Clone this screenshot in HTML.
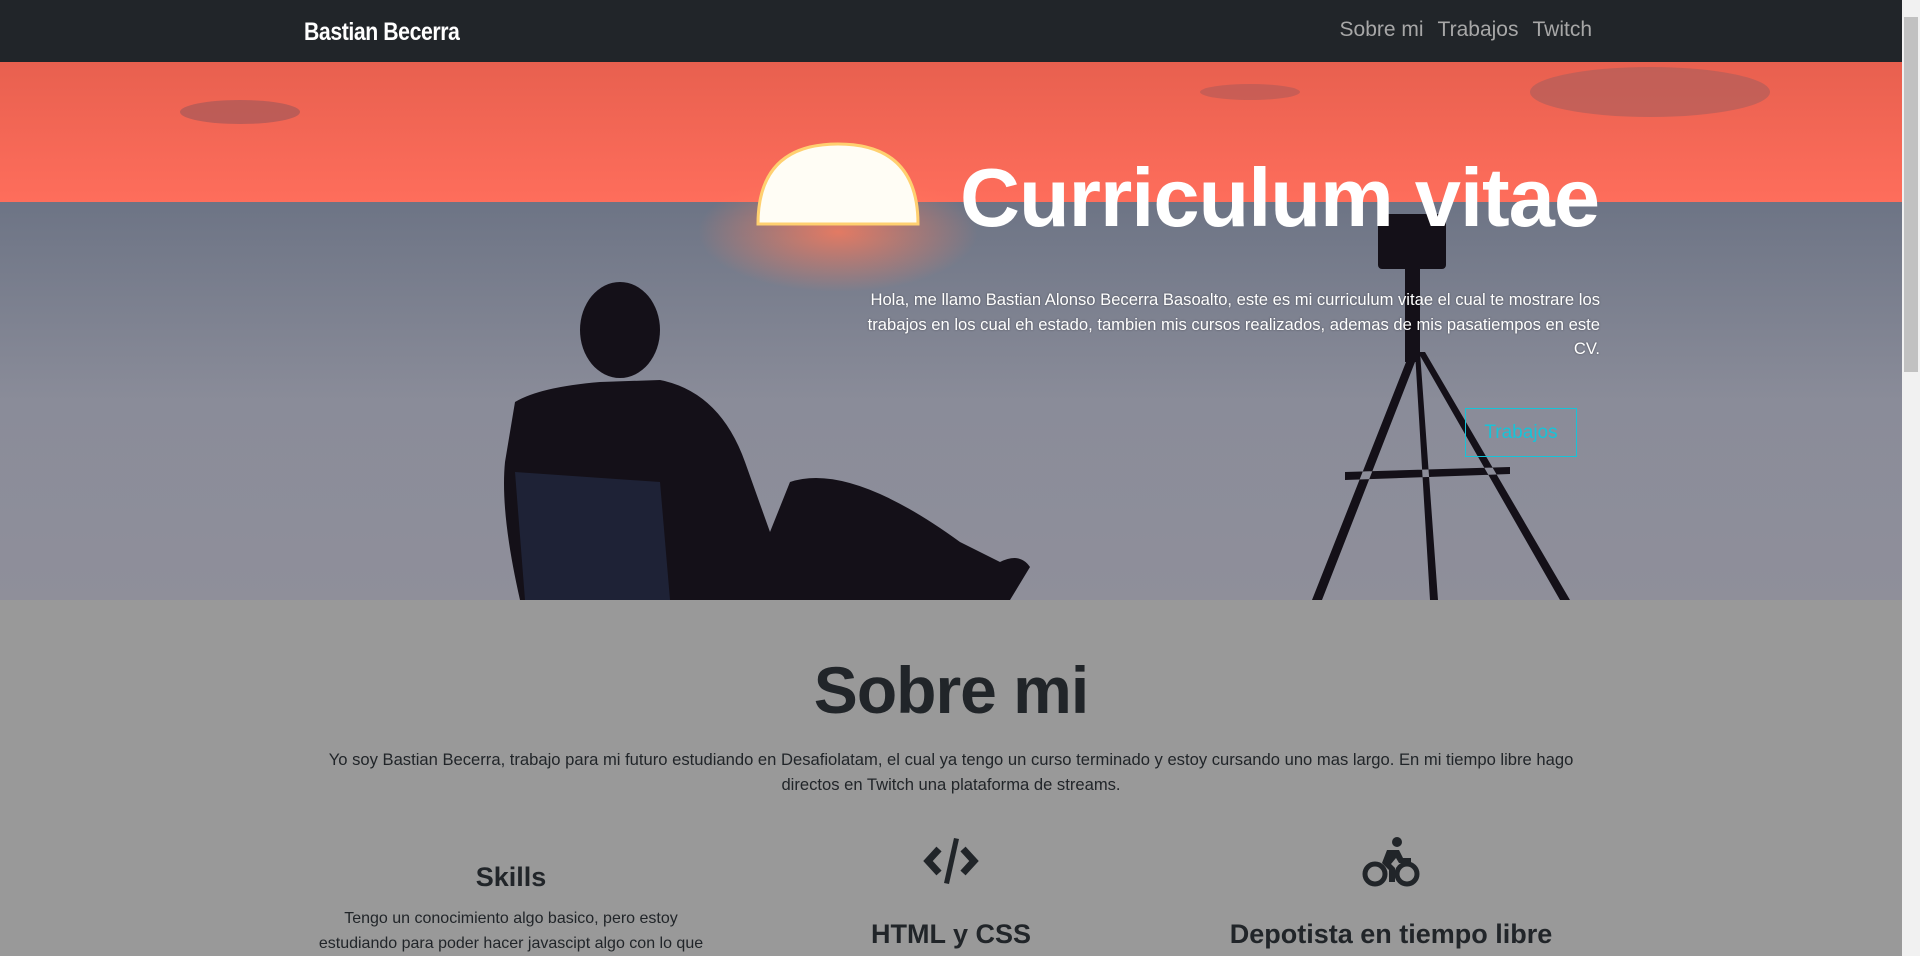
<!DOCTYPE html>
<html><head><meta charset="utf-8">
<style>
*{margin:0;padding:0;box-sizing:border-box}
html,body{width:1920px;height:956px;overflow:hidden;background:#999;font-family:"Liberation Sans",sans-serif}
.nav{position:absolute;left:0;top:0;width:1902px;height:62px;background:#212529}
.brand{position:absolute;left:304px;top:18px;color:#fff;font-family:"Liberation Sans Narrow","Liberation Sans",sans-serif;font-weight:bold;font-size:25px;transform:scaleX(.85);transform-origin:left;letter-spacing:-0.5px}
.links{position:absolute;right:310px;top:18px;color:#a7a7a7;font-size:21px}
.links span{margin-left:14px}
.hero{position:absolute;left:0;top:62px;width:1902px;height:538px;overflow:hidden}
.hero svg{position:absolute;left:0;top:0}
h1{position:absolute;right:303px;top:88px;color:#fff;font-size:83px;font-weight:bold;letter-spacing:-1px}
.hp{position:absolute;left:860px;width:740px;top:226px;color:#fff;font-size:16.6px;line-height:24.5px;text-align:right;text-shadow:0 0 2px rgba(0,0,0,.4)}
.btn{position:absolute;left:1465px;top:346px;width:112px;height:49px;border:1px solid #17c3d8;color:#17c3d8;font-size:19px;text-align:center;line-height:47px}
.sec{position:absolute;left:0;top:600px;width:1902px;height:356px;background:#999;color:#212529;text-align:center}
.sec h2{position:absolute;left:0;width:1902px;top:52px;font-size:66px;font-weight:bold;letter-spacing:-1px}
.sec .p{position:absolute;left:310px;width:1282px;top:148px;font-size:16.6px;line-height:24.5px}
.col{position:absolute;width:420px;text-align:center}
.col h3{font-size:27px;font-weight:bold}
.col p{font-size:16px;line-height:24.5px;margin-top:14px}
.sb{position:absolute;left:1902px;top:0;width:18px;height:956px;background:#f1f1f1}
.sb .t{position:absolute;left:2px;top:17px;width:14px;height:355px;background:#c1c1c1}
</style></head><body>
<div class="nav"><div class="brand">Bastian Becerra</div>
<div class="links"><span>Sobre mi</span><span>Trabajos</span><span>Twitch</span></div></div>
<div class="hero">
<svg width="1902" height="538" viewBox="0 0 1902 538">
<defs>
<linearGradient id="sky" x1="0" y1="0" x2="0" y2="1"><stop offset="0" stop-color="#e8604f"/><stop offset="1" stop-color="#ff6e5c"/></linearGradient>
<linearGradient id="sea" x1="0" y1="0" x2="0" y2="1"><stop offset="0" stop-color="#6d7485"/><stop offset=".5" stop-color="#8a8c99"/><stop offset="1" stop-color="#8f8f9a"/></linearGradient>
<radialGradient id="glow" cx=".5" cy=".5" r=".5"><stop offset="0" stop-color="#ff7a5a" stop-opacity=".8"/><stop offset="1" stop-color="#ff7a5a" stop-opacity="0"/></radialGradient>
</defs>
<rect width="1902" height="145" fill="url(#sky)"/>
<ellipse cx="240" cy="50" rx="60" ry="12" fill="#b05a58" opacity=".8"/>
<ellipse cx="1650" cy="30" rx="120" ry="25" fill="#a85e5c" opacity=".6"/>
<ellipse cx="1250" cy="30" rx="50" ry="8" fill="#b05a58" opacity=".6"/>
<rect y="140" width="1902" height="400" fill="url(#sea)"/>
<ellipse cx="838" cy="170" rx="140" ry="60" fill="url(#glow)"/>
<path d="M758 162 Q758 82 838 82 Q918 82 918 162 Z" fill="#fffdf5" stroke="#ffd070" stroke-width="3"/>
<g fill="#141018">
<ellipse cx="620" cy="268" rx="40" ry="48"/>
<path d="M515 340 Q540 325 600 320 L660 318 Q720 330 745 400 L770 470 L790 420 Q850 400 960 480 L1000 500 Q1020 490 1030 505 L1010 538 L520 538 Q500 450 505 400 Z"/>
<rect x="1378" y="152" width="68" height="55" rx="4"/>
<path d="M1405 207 L1420 207 L1420 300 L1405 300 Z"/>
<path d="M1410 290 L1312 538 L1322 538 L1415 300 Z M1415 290 L1430 538 L1438 538 L1420 290 Z M1418 290 L1560 538 L1570 538 L1425 290 Z M1345 410 L1510 405 L1510 412 L1345 418 Z"/>
</g>
<path d="M515 410 L660 420 L670 538 L525 538 Z" fill="#1e2236"/>
</svg>
<h1>Curriculum vitae</h1>
<div class="hp">Hola, me llamo Bastian Alonso Becerra Basoalto, este es mi curriculum vitae el cual te mostrare los trabajos en los cual eh estado, tambien mis cursos realizados, ademas de mis pasatiempos en este CV.</div>
<div class="btn">Trabajos</div>
</div>
<div class="sec">
<h2>Sobre mi</h2>
<div class="p">Yo soy Bastian Becerra, trabajo para mi futuro estudiando en Desafiolatam, el cual ya tengo un curso terminado y estoy cursando uno mas largo. En mi tiempo libre hago<br>directos en Twitch una plataforma de streams.</div>
<div class="col" style="left:301px;top:262px"><h3>Skills</h3><p>Tengo un conocimiento algo basico, pero estoy<br>estudiando para poder hacer javascipt algo con lo que</p></div>
<div class="col" style="left:741px;top:236px">
<svg width="60" height="50" viewBox="0 0 60 50"><g fill="none" stroke="#212529" stroke-width="7"><path d="M18 13 L7 25 L18 37"/><path d="M42 13 L53 25 L42 37"/></g><path d="M33 2 L38 3 L28 48 L23 47 Z" fill="#212529"/></svg>
<h3 style="margin-top:28px">HTML y CSS</h3></div>
<div class="col" style="left:1181px;top:236px">
<svg width="60" height="52" viewBox="0 0 60 52"><g fill="#212529"><circle cx="36" cy="6" r="5"/><circle cx="14" cy="38" r="10" fill="none" stroke="#212529" stroke-width="5"/><circle cx="46" cy="38" r="10" fill="none" stroke="#212529" stroke-width="5"/><path d="M26 14 L38 14 L42 22 L50 22 L50 27 L38 27 L35 22 L30 28 L34 32 L34 46 L28 46 L28 34 L21 27 Z"/></g></svg>
<h3 style="margin-top:26px">Depotista en tiempo libre</h3></div>
</div>
<div class="sb"><div class="t"></div></div>
</body></html>
